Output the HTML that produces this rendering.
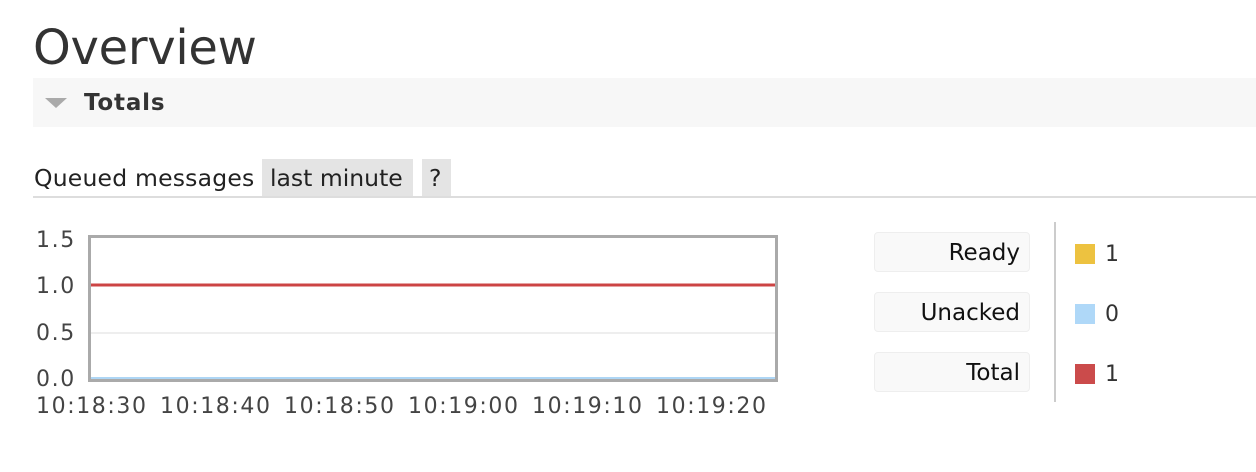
<!DOCTYPE html>
<html><head><style>
body{margin:0;background:#fff;font-family:"DejaVu Sans","Liberation Sans",sans-serif;color:#333;width:1256px;height:472px;overflow:hidden;position:relative}
.a{position:absolute;white-space:nowrap}
.ax{font-size:22px;color:#444;letter-spacing:1.6px}
.lb{width:156px;height:40px;background:#f9f9f9;border:1px solid #eee;border-radius:4px;text-align:right;font-size:23px;color:#111;line-height:40px;box-sizing:border-box;padding-right:9px}
</style></head><body>
<div class="a" style="left:33px;top:20px;font-size:48px;color:#333;letter-spacing:-0.3px">Overview</div>
<div class="a" style="left:33px;top:78px;width:1223px;height:49px;background:#f7f7f7"></div>
<div class="a" style="left:45px;top:98px;width:0;height:0;border-left:11px solid transparent;border-right:11px solid transparent;border-top:10px solid #aaa"></div>
<div class="a" style="left:84px;top:90px;font-size:23px;font-weight:bold;color:#333;letter-spacing:0.8px">Totals</div>
<div class="a" style="left:33px;top:196px;width:1223px;height:2px;background:#ddd"></div>
<div class="a" style="left:34px;top:164px;font-size:23.5px;color:#222;letter-spacing:0.2px">Queued messages</div>
<div class="a" style="left:262px;top:159px;width:151px;height:37px;background:#e4e4e4"></div>
<div class="a" style="left:270px;top:164px;font-size:23.5px;color:#222">last minute</div>
<div class="a" style="left:422px;top:159px;width:29px;height:37px;background:#e4e4e4"></div>
<div class="a" style="left:429px;top:164px;font-size:23.5px;color:#222">?</div>
<svg class="a" style="left:0;top:0" width="1256" height="472">
<line x1="90" y1="333" x2="776" y2="333" stroke="#eee" stroke-width="2"/>
<rect x="90" y="377" width="686" height="3" fill="#aed6f5"/>
<line x1="90" y1="285" x2="776" y2="285" stroke="#cc4444" stroke-width="3"/>
<rect x="89.5" y="236.5" width="687" height="144" fill="none" stroke="#aaa" stroke-width="3"/>
<line x1="1055" y1="222" x2="1055" y2="402" stroke="#ccc" stroke-width="2"/>
<rect x="1075" y="244" width="20" height="20" fill="#edc240"/>
<rect x="1075" y="304" width="20" height="20" fill="#afd8f8"/>
<rect x="1075" y="364" width="20" height="20" fill="#cb4b4b"/>
</svg>
<div class="a ax" style="left:36px;top:228px">1.5</div>
<div class="a ax" style="left:36px;top:274px">1.0</div>
<div class="a ax" style="left:36px;top:321px">0.5</div>
<div class="a ax" style="left:36px;top:367px">0.0</div>
<div class="a ax" style="left:36px;top:394px">10:18:30</div>
<div class="a ax" style="left:160px;top:394px">10:18:40</div>
<div class="a ax" style="left:284px;top:394px">10:18:50</div>
<div class="a ax" style="left:408px;top:394px">10:19:00</div>
<div class="a ax" style="left:532px;top:394px">10:19:10</div>
<div class="a ax" style="left:656px;top:394px">10:19:20</div>
<div class="a lb" style="left:874px;top:232px">Ready</div>
<div class="a lb" style="left:874px;top:292px">Unacked</div>
<div class="a lb" style="left:874px;top:352px">Total</div>
<div class="a ax" style="left:1105px;top:242px;color:#333">1</div>
<div class="a ax" style="left:1105px;top:302px;color:#333">0</div>
<div class="a ax" style="left:1105px;top:362px;color:#333">1</div>
</body></html>
